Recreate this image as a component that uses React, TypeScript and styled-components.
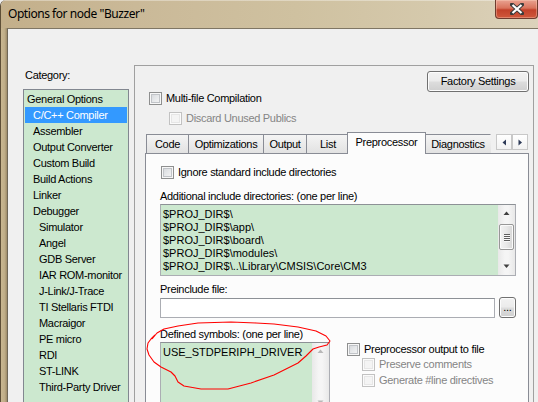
import React from "react";
import styled, { createGlobalStyle } from "styled-components";

const GlobalStyle = createGlobalStyle`
  html, body { margin: 0; padding: 0; background: #f0f0f0; }
  body {
    font-family: "Liberation Sans", Arial, sans-serif;
    font-size: 11px;
    letter-spacing: -0.3px;
    color: #000;
  }
  * { box-sizing: border-box; }
`;

const categories: { label: string; level: number; selected?: boolean }[] = [
  { label: "General Options", level: 0 },
  { label: "C/C++ Compiler", level: 1, selected: true },
  { label: "Assembler", level: 1 },
  { label: "Output Converter", level: 1 },
  { label: "Custom Build", level: 1 },
  { label: "Build Actions", level: 1 },
  { label: "Linker", level: 1 },
  { label: "Debugger", level: 1 },
  { label: "Simulator", level: 2 },
  { label: "Angel", level: 2 },
  { label: "GDB Server", level: 2 },
  { label: "IAR ROM-monitor", level: 2 },
  { label: "J-Link/J-Trace", level: 2 },
  { label: "TI Stellaris FTDI", level: 2 },
  { label: "Macraigor", level: 2 },
  { label: "PE micro", level: 2 },
  { label: "RDI", level: 2 },
  { label: "ST-LINK", level: 2 },
  { label: "Third-Party Driver", level: 2 },
];

const tabs: { label: string; width: number; selected?: boolean; clipped?: boolean }[] = [
  { label: "Code", width: 43 },
  { label: "Optimizations", width: 76 },
  { label: "Output", width: 44 },
  { label: "List", width: 44 },
  { label: "Preprocessor", width: 79, selected: true },
  { label: "Diagnostics", width: 66, clipped: true },
];

const includeDirs = [
  "$PROJ_DIR$\\",
  "$PROJ_DIR$\\app\\",
  "$PROJ_DIR$\\board\\",
  "$PROJ_DIR$\\modules\\",
  "$PROJ_DIR$\\..\\Library\\CMSIS\\Core\\CM3",
];

// window chrome
const Window = styled.div`
  position: relative;
  width: 538px;
  height: 402px;
  overflow: hidden;
  display: flex;
  flex-direction: column;
  border-left: 1px solid #5e4f37;
  border-top-left-radius: 6px;
  background: #f0f0f0;
`;

const TitleBar = styled.div`
  flex: none;
  height: 28px;
  display: flex;
  align-items: flex-start;
  background: linear-gradient(90deg, #c3af8a 0%, #cab998 25%, #cfc1a0 55%, #d5c9ac 80%, #dcd2bb 100%);
  box-shadow: inset 0 1px 0 rgba(255, 255, 255, 0.35);
`;

const Title = styled.div`
  padding: 6px 0 0 7px;
  font-family: "Noto Sans", "Liberation Sans", sans-serif;
  font-size: 12px;
  letter-spacing: -0.45px;
  line-height: 16px;
  color: #000;
`;

const CloseButton = styled.div`
  margin-left: auto;
  width: 43px;
  height: 19px;
  display: flex;
  align-items: center;
  justify-content: center;
  border: 1px solid #6e3b2e;
  border-top: none;
  border-radius: 0 0 4px 4px;
  background: linear-gradient(180deg, #e9a291 0%, #d9735c 45%, #c2412a 55%, #d0583c 100%);
  box-shadow: inset 0 0 0 1px rgba(255, 220, 200, 0.35);
`;

const Body = styled.div`
  flex: 1;
  display: flex;
`;

const LeftFrame = styled.div`
  width: 6px;
  flex: none;
  background: linear-gradient(90deg, #c9b791 0%, #bfad88 60%, #9d8b69 100%);
`;

const Client = styled.div`
  flex: 1;
  display: flex;
  align-items: stretch;
  padding: 36px 0 0 15px;
  border-top: 1px solid #7f7664;
  border-left: 1px solid #6f6757;
  background: #f0f0f0;
`;

// category list
const CategoryColumn = styled.div`
  width: 106px;
  margin-right: 5px;
  display: flex;
  flex-direction: column;
`;

const CategoryLabel = styled.div`
  margin-top: 4px;
  padding-left: 2px;
  line-height: 13px;
`;

const ListBox = styled.div`
  flex: 1;
  margin-top: 7px;
  padding: 1px;
  border: 1px solid #828790;
  background: #cce8cf;
`;

const ListItem = styled.div<{ $level: number; $selected?: boolean }>`
  height: 16px;
  line-height: 16px;
  padding-left: ${(p) => 2 + p.$level * 6}px;
  white-space: nowrap;
  background: ${(p) => (p.$selected ? "#3399ff" : "transparent")};
  color: ${(p) => (p.$selected ? "#fff" : "#000")};
`;

// right-hand panel
const MainPanel = styled.div`
  width: 400px;
  display: flex;
  flex-direction: column;
  padding: 5px 4px 0 10px;
  border: 1px solid #a0a0a0;
  border-bottom: none;
`;

const ButtonRow = styled.div`
  display: flex;
  justify-content: flex-end;
`;

const PushButton = styled.div<{ $w: number; $h: number }>`
  width: ${(p) => p.$w}px;
  height: ${(p) => p.$h}px;
  display: flex;
  align-items: center;
  justify-content: center;
  border: 1px solid #707070;
  border-radius: 3px;
  background: linear-gradient(180deg, #f2f2f2 0%, #ebebeb 48%, #dddddd 52%, #cfcfcf 100%);
  box-shadow: inset 0 0 0 1px #fcfcfc;
  line-height: 13px;
`;

const CheckRow = styled.div<{ $indent: number; $top?: number }>`
  display: flex;
  align-items: center;
  gap: 4px;
  height: 13px;
  margin-left: ${(p) => p.$indent}px;
  margin-top: ${(p) => p.$top ?? 0}px;
  white-space: nowrap;
`;

const CheckBox = styled.span<{ $disabled?: boolean }>`
  width: 13px;
  height: 13px;
  flex: none;
  border: 1px solid ${(p) => (p.$disabled ? "#c2c2c2" : "#8e8f8f")};
  background: ${(p) =>
    p.$disabled ? "#f4f4f4" : "linear-gradient(135deg, #d2d4d8 0%, #e6e8ea 50%, #f8f8f8 100%)"};
  box-shadow: inset 0 0 0 1px ${(p) => (p.$disabled ? "#fbfbfb" : "#f7f7f7")},
    inset 0 0 0 2px ${(p) => (p.$disabled ? "#e6e6e6" : "#c1c4c8")};
`;

const Label = styled.span<{ $disabled?: boolean }>`
  color: ${(p) => (p.$disabled ? "#858585" : "#000")};
  line-height: 13px;
`;

// tabs
const TabStrip = styled.div`
  display: flex;
  align-items: flex-end;
  height: 21px;
  margin-top: 7px;
  padding-left: 1px;
`;

const Tab = styled.div<{ $w: number; $selected?: boolean; $clipped?: boolean }>`
  position: relative;
  width: ${(p) => p.$w}px;
  height: ${(p) => (p.$selected ? 22 : 19)}px;
  margin: ${(p) => (p.$selected ? "0 -1px -1px -2px" : "0 -1px 0 0")};
  z-index: ${(p) => (p.$selected ? 1 : 0)};
  padding-top: 3px;
  text-align: center;
  line-height: 13px;
  border: 1px solid #898c95;
  border-bottom: none;
  border-right-color: ${(p) => (p.$clipped ? "transparent" : "#898c95")};
  background: ${(p) =>
    p.$selected ? "#fcfcfc" : "linear-gradient(180deg, #f4f4f4 0%, #ebebeb 50%, #e2e2e2 100%)"};
  white-space: nowrap;
  overflow: hidden;
`;

const ArrowBox = styled.div`
  margin-left: auto;
  align-self: flex-start;
  margin-top: 2px;
  display: flex;
  padding: 0 1px 0 4px;
`;

const ArrowButton = styled.div`
  width: 16px;
  height: 16px;
  display: flex;
  align-items: center;
  justify-content: center;
  border: 1px solid #c8c8c8;
  background: linear-gradient(180deg, #ffffff 0%, #f2f2f2 100%);
`;

const TabPanel = styled.div`
  flex: 1;
  padding: 12px 0 0 14px;
  border: 1px solid #898c95;
  border-bottom: none;
  background: #fcfcfc;
`;

const FieldLabel = styled.div<{ $top: number }>`
  margin-top: ${(p) => p.$top}px;
  line-height: 13px;
  white-space: nowrap;
`;

const TextArea = styled.div<{ $w: number; $h: number }>`
  position: relative;
  width: ${(p) => p.$w}px;
  height: ${(p) => p.$h}px;
  margin-top: 1px;
  display: flex;
  border: 1px solid #abadb3;
  border-top-color: #8d9196;
  background: #cce8cf;
  overflow: hidden;
`;

const TextLines = styled.div`
  flex: 1;
  padding: 3px 0 0 2px;
  line-height: 13px;
  letter-spacing: 0;
  white-space: nowrap;
  overflow: hidden;
`;

const ScrollBar = styled.div`
  width: 17px;
  flex: none;
  display: flex;
  flex-direction: column;
  background: linear-gradient(90deg, #e8e8e8 0%, #f5f5f5 40%, #f5f5f5 60%, #e8e8e8 100%);
`;

const ScrollArrow = styled.div`
  height: 17px;
  flex: none;
  display: flex;
  align-items: center;
  justify-content: center;
`;

const ScrollTrack = styled.div`
  flex: 1;
  padding: 2px 1px 0;
`;

const Thumb = styled.div`
  height: 26px;
  display: flex;
  flex-direction: column;
  align-items: center;
  justify-content: center;
  gap: 1px;
  border: 1px solid #979797;
  border-radius: 2px;
  background: linear-gradient(90deg, #f3f3f3 0%, #e8e8e8 50%, #d6d6d6 100%);
  box-shadow: inset 0 0 0 1px #fafafa;
`;

const Grip = styled.span`
  width: 6px;
  height: 1px;
  background: #5f5f5f;
  box-shadow: 0 1px 0 #f8f8f8;
`;

const InputRow = styled.div`
  display: flex;
  align-items: center;
  gap: 4px;
  margin-top: 1px;
`;

const TextInput = styled.div`
  width: 335px;
  height: 20px;
  border: 1px solid #abadb3;
  border-top-color: #8d9196;
  background: #fff;
`;

const BottomRow = styled.div`
  display: flex;
  margin-top: 10px;
`;

const Column = styled.div`
  display: flex;
  flex-direction: column;
`;

const OptionsColumn = styled.div`
  display: flex;
  flex-direction: column;
  margin-left: 17px;
  padding-top: 15px;
`;

const Annotation = styled.svg`
  position: absolute;
  left: 0;
  top: 0;
  pointer-events: none;
`;

const Tri = ({ dir, color }: { dir: "up" | "down" | "left" | "right"; color: string }) => {
  const pts = {
    up: "0.5,4 3.5,0.5 6.5,4",
    down: "0.5,0.5 3.5,4 6.5,0.5",
    left: "4,0.5 0.5,3.5 4,6.5",
    right: "0.5,0.5 4,3.5 0.5,6.5",
  }[dir];
  const vertical = dir === "up" || dir === "down";
  return (
    <svg width={vertical ? 7 : 5} height={vertical ? 5 : 7}>
      <polygon points={pts} fill={color} />
    </svg>
  );
};

const Check = ({ label, indent, top, disabled }: { label: string; indent: number; top?: number; disabled?: boolean }) => (
  <CheckRow $indent={indent} $top={top}>
    <CheckBox $disabled={disabled} />
    <Label $disabled={disabled}>{label}</Label>
  </CheckRow>
);

const redLoop =
  "151,339 156,333 163,329 177,326 197,323 230,322 255,323 273,324 297,327 315,331 325,336 329,341 326,345 318,347 312,349 305,356 297,363 285,369 273,375 250,383 227,389 200,389 183,386 177,382 174,376 170,372 160,367 153,362 148,355 146,349 147,343 150,339 154,335";

export default function App() {
  return (
    <>
      <GlobalStyle />
      <Window>
        <TitleBar>
          <Title>Options for node &quot;Buzzer&quot;</Title>
          <CloseButton>
            <svg width="14" height="12" viewBox="0 0 14 12">
              <path d="M2 1.5 L12 10.5 M12 1.5 L2 10.5" stroke="#3b3b3b" strokeWidth="4" strokeLinecap="square" />
              <path d="M2.5 2 L11.5 10 M11.5 2 L2.5 10" stroke="#ffffff" strokeWidth="2.2" strokeLinecap="butt" />
            </svg>
          </CloseButton>
        </TitleBar>
        <Body>
          <LeftFrame />
          <Client>
            <CategoryColumn>
              <CategoryLabel>Category:</CategoryLabel>
              <ListBox>
                {categories.map((c) => (
                  <ListItem key={c.label} $level={c.level} $selected={c.selected}>
                    {c.label}
                  </ListItem>
                ))}
              </ListBox>
            </CategoryColumn>

            <MainPanel>
              <ButtonRow>
                <PushButton $w={102} $h={21}>Factory Settings</PushButton>
              </ButtonRow>
              <Check label="Multi-file Compilation" indent={4} />
              <Check label="Discard Unused Publics" indent={24} top={7} disabled />

              <TabStrip>
                {tabs.map((t) => (
                  <Tab key={t.label} $w={t.width} $selected={t.selected} $clipped={t.clipped}>
                    {t.label}
                  </Tab>
                ))}
                <ArrowBox>
                  <ArrowButton>
                    <Tri dir="left" color="#2d3a57" />
                  </ArrowButton>
                  <ArrowButton>
                    <Tri dir="right" color="#2d3a57" />
                  </ArrowButton>
                </ArrowBox>
              </TabStrip>

              <TabPanel>
                <Check label="Ignore standard include directories" indent={1} />
                <FieldLabel $top={11}>Additional include directories: (one per line)</FieldLabel>
                <TextArea $w={356} $h={72}>
                  <TextLines>
                    {includeDirs.map((d) => (
                      <div key={d}>{d}</div>
                    ))}
                  </TextLines>
                  <ScrollBar>
                    <ScrollArrow>
                      <Tri dir="up" color="#404040" />
                    </ScrollArrow>
                    <ScrollTrack>
                      <Thumb>
                        <Grip />
                        <Grip />
                        <Grip />
                        <Grip />
                      </Thumb>
                    </ScrollTrack>
                    <ScrollArrow>
                      <Tri dir="down" color="#404040" />
                    </ScrollArrow>
                  </ScrollBar>
                </TextArea>

                <FieldLabel $top={7}>Preinclude file:</FieldLabel>
                <InputRow>
                  <TextInput />
                  <PushButton $w={17} $h={21}>...</PushButton>
                </InputRow>

                <BottomRow>
                  <Column>
                    <FieldLabel $top={0}>Defined symbols: (one per line)</FieldLabel>
                    <TextArea $w={170} $h={70}>
                      <TextLines>USE_STDPERIPH_DRIVER</TextLines>
                      <ScrollBar>
                        <ScrollArrow>
                          <Tri dir="up" color="#b8b8b8" />
                        </ScrollArrow>
                        <ScrollTrack />
                        <ScrollArrow>
                          <Tri dir="down" color="#b8b8b8" />
                        </ScrollArrow>
                      </ScrollBar>
                    </TextArea>
                  </Column>
                  <OptionsColumn>
                    <Check label="Preprocessor output to file" indent={0} />
                    <Check label="Preserve comments" indent={15} top={2} disabled />
                    <Check label="Generate #line directives" indent={15} top={3} disabled />
                  </OptionsColumn>
                </BottomRow>
              </TabPanel>
            </MainPanel>
          </Client>
        </Body>

        <Annotation width="538" height="402" viewBox="0 0 538 402">
          <polyline points={redLoop} fill="none" stroke="#ff0000" strokeWidth="1.1" strokeLinejoin="round" />
        </Annotation>
      </Window>
    </>
  );
}
